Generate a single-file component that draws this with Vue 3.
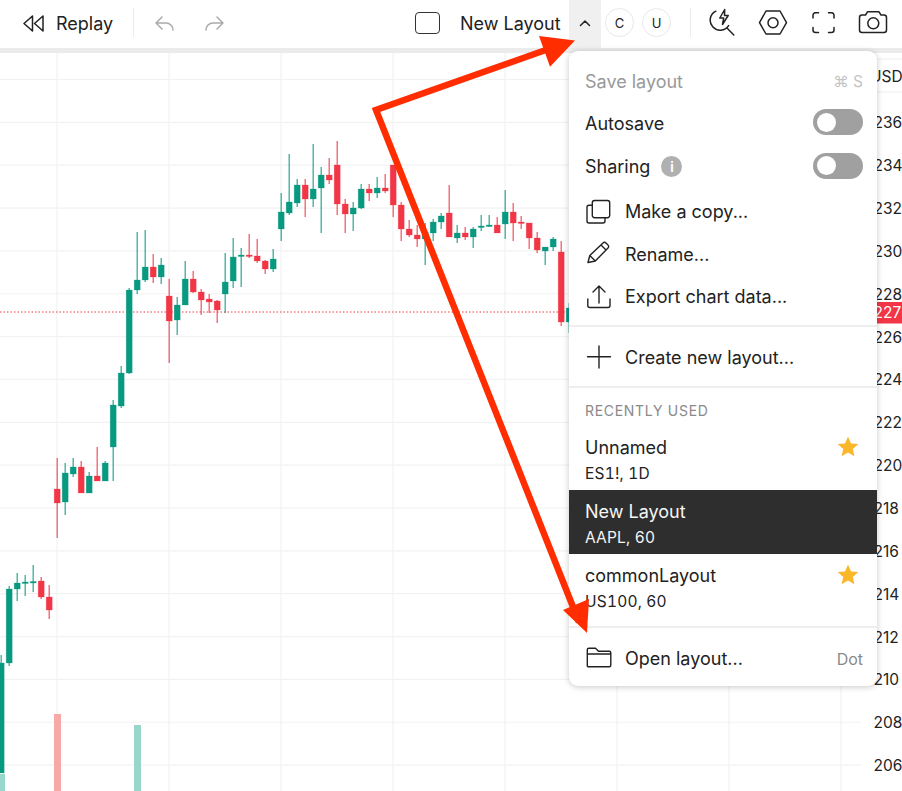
<script setup>
const G = '#089981', R = '#f23645'
const raw = [
  [655,773,663,773,G],[586,666,589,663,G],[573,601,583,589,G],[575,596,582,583.5,G],[565,592,581.5,583,G],
  [577,599,581,597,R],[585,619,597,610,R],[458,538,489,503,R],[463,515,473,502,G],[458,477,467,474,G],
  [461,493,467,493,R],[472,493,476,493,G],[447,481,476,481,R],[461,481,463,481,G],[400,481,405,447,G],
  [366,408,373,406,G],[288,374,290,373,G],[232,294,280,290,G],[230,282,267,280,G],[254,283,267,277,R],
  [258,284,265,277,G],[279,363,296,321,R],[297,335,305,320,G],[261,305,279,305,G],[271,293,279,292,R],
  [289,315,292,300,R],[294,313,299,302,R],[300,323,301,310,R],[253,313,282,294,G],[238,288,257,281,G],
  [248,287,255,256.5,G],[234,258,255,256.5,R],[239,263,256,261,R],[260,274,261,269,R],[249,272,259,269,G],
  [193,241,212,229,G],[154,215,202,213,G],[179,207,185,203,G],[179,217,185,199,R],[144,207,189,199,G],
  [167,233,175,188,G],[158,184,175,180,R],[141,215,165,204,R],[199,233,204,214,R],[202,231,208,214,G],
  [184,209,189,208,G],[184,201,189,193,R],[177,198,188,193,G],[174,193,188,191,R],[165,217,165,205,R],
  [202,241,205,229,R],[220,237,229,235,R],[225,247,235,239,R],[223,265,232,239,G],[219,241,222,233,G],
  [213,229,216,222,G],[185,237,213,237,R],[225,243,233,238,G],[227,240,233,237,R],[227,248,229,237,G],
  [215,231,226,227.5,G],[215,227,225,226.5,G],[217,233,225,233,R],[190,239,212,224,G],[203,241,212,223,R],
  [216,229,222,223.5,R],[223,249,223,238,R],[232,253,238,250,R],[247,265,247,251,G],[237,251,239,247,G],
  [241,326,252,322,R],[303,333,308,322,G]
]
const candles = raw.map((c, i) => ({ x: 1.2 + 8 * i, wt: c[0], wb: c[1], bt: c[2], bh: c[3] - c[2], col: c[4] }))
const hLines = Array.from({ length: 17 }, (_, i) => 79.5 + 42.85 * i)
const vLines = [57, 169, 281, 393, 505, 617, 729, 841]
const prices = [236,234,232,230,228,226,224,222,220,218,216,214,212,210,208,206].map((p, i) => ({ p, y: 122.3 + 42.85 * i }))
const vols = [
  { x: 0, y: 774, w: 5, c: '#99d6cc' },
  { x: 54, y: 714, w: 7, c: '#f7a9a7' },
  { x: 134, y: 725, w: 7, c: '#99d6cc' }
]
const star = 'M0 -10.5 L3 -3.6 L10.3 -3 L4.8 1.9 L6.4 9.2 L0 5.4 L-6.4 9.2 L-4.8 1.9 L-10.3 -3 L-3 -3.6 Z'
</script>

<template>
  <div class="screen">
    <header class="toolbar">
      <svg class="i-rewind" width="21" height="17" viewBox="0 0 21 17"><path d="M9.5 1 L1 8.5 L9.5 16 Z M20 1 L11.5 8.5 L20 16 Z" /></svg>
      <span class="replay">Replay</span>
      <span class="tdiv first"></span>
      <svg class="i-undo" width="19" height="15" viewBox="0 0 19 15"><path d="M7 1 L1 7 L7 13 M1 7 H11 A7 7 0 0 1 18 14" /></svg>
      <svg class="i-redo" width="19" height="15" viewBox="0 0 19 15"><path d="M12 1 L18 7 L12 13 M18 7 H8 A7 7 0 0 0 1 14" /></svg>
      <span class="square"></span>
      <span class="layout-name">New Layout</span>
      <span class="chevron">
        <svg width="12" height="8" viewBox="0 0 12 8"><path d="M1.5 6.5 L6 2 L10.5 6.5" /></svg>
      </span>
      <span class="circ c">C</span>
      <span class="circ u">U</span>
      <span class="tdiv second"></span>
      <svg class="tool t-bolt" width="26" height="28" viewBox="709 8 26 28">
        <path d="M715.8 11.2 A10 10 0 1 0 728.6 25.6" />
        <path d="M724.7 9.5 L719.8 18 L723.7 18 L722.5 24.5 L728.2 15.5 L724.5 15.5 Z" />
        <path d="M727 28 L733.8 35" />
      </svg>
      <svg class="tool t-hex" width="30" height="26" viewBox="758 10 30 26">
        <path d="M759.5 22.7 L766 11 H780 L786.5 22.7 L780 34 H766 Z" />
        <circle cx="773" cy="22.7" r="5" />
      </svg>
      <svg class="tool t-full" width="23" height="22" viewBox="812 12 23 22">
        <path d="M813 18 V15 A2.5 2.5 0 0 1 815.5 12.7 H818.5 M828.5 12.7 H831.5 A2.5 2.5 0 0 1 834 15 V18 M834 27.5 V30 A2.5 2.5 0 0 1 831.5 32.5 H828.5 M818.5 32.5 H815.5 A2.5 2.5 0 0 1 813 30 V27.5" />
      </svg>
      <svg class="tool t-cam" width="30" height="24" viewBox="858 10 30 24">
        <path d="M862 15 H865.5 L867.5 11.8 H879 L881 15 H884 A2.5 2.5 0 0 1 886.5 17.5 V30 A2.5 2.5 0 0 1 884 32.5 H862 A2.5 2.5 0 0 1 859.5 30 V17.5 A2.5 2.5 0 0 1 862 15 Z" />
        <circle cx="873.3" cy="23.3" r="5.5" />
      </svg>
    </header>
    <div class="sep"></div>

    <main class="chart">
      <svg class="plot" width="902" height="738" viewBox="0 53 902 738">
        <g stroke="#f2f2f2" stroke-width="1.2">
          <line v-for="y in hLines" :key="'h' + y" x1="0" x2="861" :y1="y" :y2="y" />
          <line v-for="x in vLines" :key="'v' + x" :x1="x" :x2="x" y1="53" y2="791" />
        </g>
        <line class="edge" x1="869" x2="902" y1="59" y2="59" />
        <line class="edge" x1="869" x2="902" y1="92" y2="92" />
        <rect v-for="v in vols" :key="v.x" :x="v.x" :y="v.y" :width="v.w" :height="791 - v.y" :fill="v.c" />
        <line x1="0" x2="569" y1="312" y2="312" stroke="#f23645" stroke-width="1" stroke-dasharray="1.5 2" />
        <g v-for="c in candles" :key="c.x">
          <line :x1="c.x" :x2="c.x" :y1="c.wt" :y2="c.wb" :stroke="c.col" stroke-width="1.3" opacity="0.8" />
          <rect :x="c.x - 3" :y="c.bt" width="6" :height="c.bh" :fill="c.col" :stroke="c.col" stroke-opacity="0.3" stroke-width="0.8" />
        </g>
        <text x="870" y="82" class="axis">USD</text>
        <rect x="868" y="302" width="34" height="21.5" fill="#f23645" />
        <text v-for="t in prices" :key="t.p" x="873.5" :y="t.y + 6" class="axis">{{ t.p }}</text>
        <text x="873.5" y="318" class="axis white">227</text>
      </svg>
    </main>

    <section class="menu">
      <div class="row first-row muted"><span>Save layout</span><span class="kbd">⌘ S</span></div>
      <div class="row auto-row"><span>Autosave</span><span class="toggle"><i></i></span></div>
      <div class="row share-row">
        <span class="share-text">Sharing</span><span class="info">i</span>
        <span class="toggle"><i></i></span>
      </div>
      <div class="row action gap-top">
        <svg class="mi" width="26" height="26" viewBox="586 198 26 26"><path d="M594.5 199.5 H607.5 A2.2 2.2 0 0 1 609.7 201.7 V214.5 A2.2 2.2 0 0 1 607.5 216.7 H594.5 A2.2 2.2 0 0 1 592.3 214.5 V201.7 A2.2 2.2 0 0 1 594.5 199.5 Z" /><path d="M592 204.2 H589 A2 2 0 0 0 587 206.2 V220 A2 2 0 0 0 589 222 H603 A2 2 0 0 0 605 220 V217" /></svg>
        <span>Make a copy...</span>
      </div>
      <div class="row action">
        <svg class="mi" width="26" height="26" viewBox="586 242 26 26"><path d="M588 263.5 L589.8 256.5 L603 244 A2 2 0 0 1 606 244 L608 246 A2 2 0 0 1 608 249 L595.3 262 Z M589.8 256.5 L595.3 262 M601 246 L606 251" /></svg>
        <span>Rename...</span>
      </div>
      <div class="row action">
        <svg class="mi" width="26" height="26" viewBox="586 283 26 26"><path d="M599 302 V285 M593 291 L599 285 L605 291 M587.8 298 V304.5 A2 2 0 0 0 589.8 306.5 H608 A2 2 0 0 0 610 304.5 V298" /></svg>
        <span>Export chart data...</span>
      </div>
      <div class="divider d1"></div>
      <div class="row action">
        <svg class="mi" width="26" height="26" viewBox="586 343 26 26"><path d="M587.5 355.8 H610.5 M599 345 V367" /></svg>
        <span>Create new layout...</span>
      </div>
      <div class="divider d2"></div>
      <div class="section-label">RECENTLY USED</div>
      <div class="recent">
        <div><div class="name">Unnamed</div><div class="sub">ES1!, 1D</div></div>
        <svg class="star" width="22" height="22" viewBox="-11 -11 22 22"><path :d="star" /></svg>
      </div>
      <div class="recent active">
        <div><div class="name">New Layout</div><div class="sub">AAPL, 60</div></div>
      </div>
      <div class="recent">
        <div><div class="name">commonLayout</div><div class="sub">US100, 60</div></div>
        <svg class="star" width="22" height="22" viewBox="-11 -11 22 22"><path :d="star" /></svg>
      </div>
      <div class="divider d3"></div>
      <div class="row action last-row">
        <svg class="mi" width="26" height="26" viewBox="585 645 26 26"><path d="M587 665.8 A0.8 0.8 0 0 1 586.3 665 V648.8 A1.5 1.5 0 0 1 587.8 647.3 H594.5 L597.5 650.3 H608.3 A1.5 1.5 0 0 1 609.8 651.8 V664.3 A1.5 1.5 0 0 1 608.3 665.8 Z M586.3 653 H609.8" /></svg>
        <span>Open layout...</span>
        <span class="dot">Dot</span>
      </div>
    </section>

    <svg class="arrows" width="902" height="791" viewBox="0 0 902 791">
      <path d="M550 48.5 L376 110 L579 622" />
      <polygon points="575,40.5 539,36 550,66.7" />
      <polygon points="587,633 563,610 589,599" />
    </svg>
  </div>
</template>

<style scoped>
.screen {
  position: relative;
  width: 902px;
  height: 791px;
  overflow: hidden;
  display: flex;
  flex-direction: column;
  background: #fff;
  color: #222;
  font-family: Inter, "Liberation Sans", sans-serif;
  font-size: 18px;
}
.toolbar {
  height: 48px;
  flex: none;
  display: flex;
  align-items: center;
  background: #fff;
}
.toolbar svg path, .toolbar svg circle {
  fill: none;
  stroke: #222;
  stroke-width: 1.5;
  stroke-linecap: round;
  stroke-linejoin: round;
}
.i-rewind { margin-left: 23px; margin-top: -1px; }
.replay { margin-left: 12px; width: 57px; white-space: nowrap; margin-top: -1px; }
.tdiv { width: 1px; height: 29px; background: #ececec; margin-top: -3px; }
.tdiv.first { margin-left: 20px; }
.i-undo { margin-left: 21px; margin-top: -2px; }
.i-redo { margin-left: 31px; margin-top: -2px; }
.toolbar .i-undo path, .toolbar .i-redo path { stroke: #aaa; }
.square {
  width: 25px;
  height: 22px;
  box-sizing: border-box;
  border: 1.5px solid #333;
  border-radius: 4px;
  margin-left: 191px;
  margin-top: -3px;
}
.layout-name { margin-left: 20px; width: 101px; white-space: nowrap; margin-top: -1px; }
.chevron {
  margin-left: 8px;
  width: 32px;
  height: 48px;
  flex: none;
  background: #f0f0f0;
  display: flex;
  align-items: center;
  justify-content: center;
  padding-bottom: 3px;
  box-sizing: border-box;
}
.circ {
  width: 29px;
  height: 29px;
  box-sizing: border-box;
  border: 1px solid #e8e8e8;
  border-radius: 50%;
  display: flex;
  align-items: center;
  justify-content: center;
  font-size: 13px;
  margin-top: -3px;
}
.circ.c { margin-left: 4px; }
.circ.u { margin-left: 8px; }
.tdiv.second { margin-left: 19px; }
.tool { flex: none; margin-top: -4px; }
.t-bolt { margin-left: 18px; margin-top: -4px; }
.t-hex { margin-left: 23px; margin-top: -3px; }
.t-full { margin-left: 24px; margin-top: -3px; }
.t-cam { margin-left: 23px; margin-top: -4px; }
.sep { height: 5px; flex: none; background: #ebebeb; }
.chart { flex: 1; position: relative; min-height: 0; }
.plot { position: absolute; inset: 0; display: block; }
.edge { stroke: #ededed; stroke-width: 1; }
.axis { font-size: 15.5px; fill: #222; font-family: Inter, "Liberation Sans", sans-serif; }
.axis.white { fill: #fff; }
.menu {
  position: absolute;
  left: 569px;
  top: 51px;
  width: 308px;
  height: 635px;
  box-sizing: border-box;
  padding-top: 9px;
  background: #fff;
  border-radius: 9px;
  box-shadow: 0 1px 6px rgba(0, 0, 0, 0.22);
  overflow: hidden;
}
.row {
  height: 42.5px;
  display: flex;
  align-items: center;
  padding: 0 14px 0 16px;
  white-space: nowrap;
}
.first-row, .auto-row { height: 42px; }
.auto-row .toggle { margin-top: -2px; }
.share-row { height: 43px; }
.share-text { margin-top: 2px; }
.muted { color: #999; }
.kbd { margin-left: auto; font-size: 15.5px; color: #c4c4c4; }
.toggle {
  margin-left: auto;
  width: 50px;
  height: 26px;
  border-radius: 13px;
  background: #a0a0a0;
  position: relative;
  flex: none;
}
.toggle i {
  position: absolute;
  left: 3.5px;
  top: 3.5px;
  width: 19px;
  height: 19px;
  border-radius: 50%;
  background: #fff;
}
.info {
  width: 21px;
  height: 21px;
  border-radius: 50%;
  background: #b0b0b0;
  color: #fff;
  font-size: 13px;
  font-weight: 700;
  display: flex;
  align-items: center;
  justify-content: center;
  margin-left: 11px;
  margin-top: 2px;
}
.gap-top { margin-top: 3.5px; }
.action { gap: 13px; }
.mi { flex: none; margin-left: 1px; }
.mi path { fill: none; stroke: #222; stroke-width: 1.4; stroke-linecap: round; stroke-linejoin: round; }
.divider { height: 2px; background: #eeeeee; }
.d1 { margin-top: 7px; margin-bottom: 9px; }
.d2 { margin-top: 7px; }
.d3 { margin-top: 8px; margin-bottom: 10px; }
.section-label {
  height: 22px;
  margin-top: 12px;
  margin-bottom: 4px;
  padding-left: 16px;
  font-size: 14px;
  letter-spacing: 0.7px;
  color: #8a8a8a;
  display: flex;
  align-items: center;
}
.recent {
  height: 64px;
  padding: 0 16px;
  box-sizing: border-box;
  display: flex;
  align-items: flex-start;
  justify-content: space-between;
}
.name { margin-top: 10px; line-height: 24px; }
.sub { font-size: 15.5px; line-height: 24px; margin-top: 2px; letter-spacing: 0.2px; font-variant-numeric: tabular-nums; }
.recent.active { background: #2e2e2e; color: #f5f5f5; }
.star { margin-top: 10px; margin-right: 2px; }
.star path { fill: #fbb72a; }
.last-row { height: 42px; }
.dot { margin-left: auto; font-size: 16px; color: #8a8a8a; }
.arrows { position: absolute; left: 0; top: 0; pointer-events: none; }
.arrows path { fill: none; stroke: #ff2d00; stroke-width: 6.5; stroke-linejoin: miter; }
.arrows polygon { fill: #ff2d00; }
</style>
